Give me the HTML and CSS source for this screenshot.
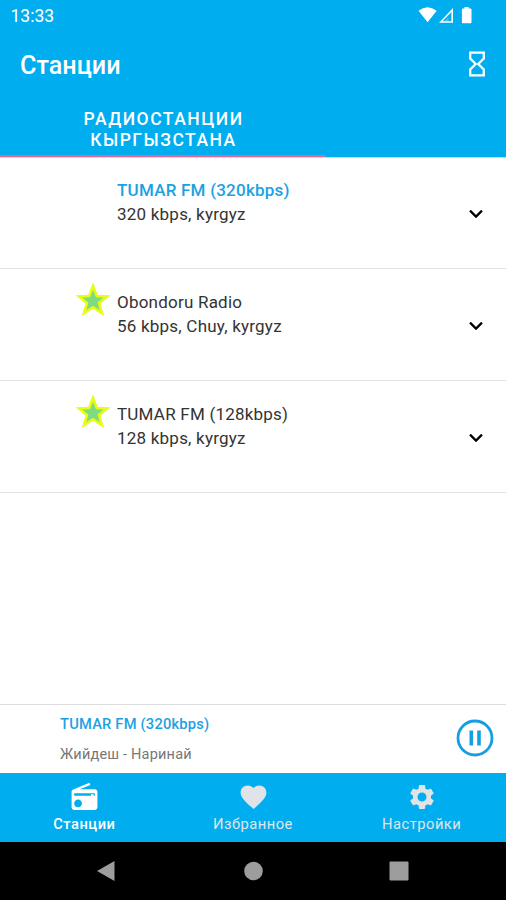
FILE: index.html
```html
<!DOCTYPE html>
<html lang="ru">
<head>
<meta charset="utf-8">
<title>Станции</title>
<link rel="stylesheet" href="styles.css">
</head>
<body>
<div class="app">
  <header class="header">
    <div class="status">
      <span class="clock">13:33</span>
      <svg class="status-icons" width="56" height="18" viewBox="0 0 56 18" fill="#fff">
        <path d="M0.5 4.8Q9.5-2.2 18.7 4.8L9.6 16.300Z"/>
        <path d="M22.800 16L34.200 4V16Z" fill="none" stroke="#fff" stroke-width="1.600"/>
        <path d="M30.500 11V15.500H26Z" opacity=".25"/>
        <path d="M46.500 1h4.300v1.600h1.700q1 0 1 1v12.700q0 1-1 1h-7.600q-1 0-1-1V3.600q0-1 1-1h1.600z"/>
      </svg>
    </div>
    <div class="toolbar">
      <h1 class="title">Станции</h1>
      <svg class="timer" width="18" height="26" viewBox="0 0 18 26" fill="none" stroke="#fff" stroke-width="2.300">
        <path d="M2.200 1.700H15.800V7.600L10.300 13L15.800 18.400V24.300H2.200V18.400L7.700 13L2.200 7.600Z"/>
      </svg>
    </div>
    <div class="tabs"><div class="tab">РАДИОСТАНЦИИ<br>КЫРГЫЗСТАНА</div></div>
  </header>

  <main class="list">
    <div class="row">
      <div class="mark"></div>
      <div class="info"><div class="name active">TUMAR FM (320kbps)</div><div class="meta">320 kbps, kyrgyz</div></div>
      <svg class="chevron" width="16" height="10" viewBox="0 0 16 10"><path d="M2 1.600L8 7.600L14 1.600"/></svg>
    </div>
    <div class="row">
      <div class="mark"><svg width="36" height="36" viewBox="0 0 36 36"><path class="star" d="M18 4L21.800 14L32 14.400L24 21L27 31.200L18 25.200L9 31.200L12 21L4 14.400L14.200 14Z"/></svg></div>
      <div class="info"><div class="name">Obondoru Radio</div><div class="meta">56 kbps, Chuy, kyrgyz</div></div>
      <svg class="chevron" width="16" height="10" viewBox="0 0 16 10"><path d="M2 1.600L8 7.600L14 1.600"/></svg>
    </div>
    <div class="row">
      <div class="mark"><svg width="36" height="36" viewBox="0 0 36 36"><path class="star" d="M18 4L21.800 14L32 14.400L24 21L27 31.200L18 25.200L9 31.200L12 21L4 14.400L14.200 14Z"/></svg></div>
      <div class="info"><div class="name">TUMAR FM (128kbps)</div><div class="meta">128 kbps, kyrgyz</div></div>
      <svg class="chevron" width="16" height="10" viewBox="0 0 16 10"><path d="M2 1.600L8 7.600L14 1.600"/></svg>
    </div>
  </main>

  <section class="player">
    <div class="now"><div class="now-name">TUMAR FM (320kbps)</div><div class="now-song">Жийдеш - Наринай</div></div>
    <svg class="pause" width="38" height="38" viewBox="0 0 38 38"><circle cx="19" cy="19" r="17" fill="none" stroke="#149fe2" stroke-width="2.800"/><path d="M13.500 11.500h3.600v15h-3.600zM21.200 11.500h3.600v15h-3.600z" fill="#149fe2"/></svg>
  </section>

  <nav class="nav">
    <div class="item selected">
      <svg width="31" height="31" viewBox="0 0 24 24" fill="currentColor"><path d="M3.240 6.150C2.510 6.430 2 7.170 2 8v12c0 1.100.89 2 2 2h16c1.110 0 2-.9 2-2V8c0-1.110-.89-2-2-2H8.300l8.260-3.340L15.880 1 3.240 6.150zM7 20c-1.660 0-3-1.340-3-3s1.340-3 3-3 3 1.340 3 3-1.340 3-3 3zm13-9h-1v-1.200h-2v1.200H4V9h16v2z"/></svg>
      <span>Станции</span>
    </div>
    <div class="item">
      <svg width="31" height="31" viewBox="0 0 24 24" fill="currentColor"><path d="M12 21.350l-1.450-1.320C5.400 15.360 2 12.280 2 8.500 2 5.420 4.420 3 7.500 3c1.740 0 3.410.81 4.500 2.090C13.090 3.810 14.760 3 16.500 3 19.580 3 22 5.420 22 8.500c0 3.780-3.400 6.860-8.550 11.540L12 21.350z"/></svg>
      <span>Избранное</span>
    </div>
    <div class="item">
      <svg width="30" height="30" viewBox="0 0 24 24" fill="currentColor"><path d="M19.140 12.940c.04-.3.060-.61.060-.94 0-.32-.02-.64-.07-.94l2.030-1.580c.18-.14.23-.41.12-.61l-1.920-3.320c-.12-.22-.37-.29-.59-.22l-2.390.96c-.5-.38-1.030-.7-1.620-.94l-.36-2.540c-.04-.24-.24-.41-.48-.41h-3.840c-.24 0-.43.17-.47.41l-.36 2.540c-.59.24-1.130.57-1.620.94l-2.390-.96c-.22-.08-.47 0-.59.22L2.740 8.870c-.12.21-.08.47.12.61l2.030 1.580c-.05.3-.09.63-.09.94s.02.64.07.94l-2.030 1.580c-.18.14-.23.41-.12.61l1.920 3.320c.12.22.37.29.59.22l2.390-.96c.5.38 1.030.7 1.620.94l.36 2.540c.05.24.24.41.48.41h3.840c.24 0 .44-.17.47-.41l.36-2.540c.59-.24 1.130-.56 1.620-.94l2.390.96c.22.08.47 0 .59-.22l1.920-3.320c.12-.22.070-.47-.12-.61l-2.010-1.580zM12 15.600c-1.980 0-3.600-1.620-3.600-3.600s1.620-3.600 3.600-3.600 3.600 1.620 3.600 3.600-1.620 3.600-3.600 3.600z"/></svg>
      <span>Настройки</span>
    </div>
  </nav>

  <div class="system">
    <svg width="20" height="22" viewBox="0 0 20 22"><path d="M1 11L18.500 1V21Z"/></svg>
    <svg width="20" height="20" viewBox="0 0 20 20"><circle cx="10.500" cy="10" r="9.300"/></svg>
    <svg width="20" height="20" viewBox="0 0 20 20"><rect x=".5" y=".5" width="19" height="19" rx="1"/></svg>
  </div>
</div>
</body>
</html>
```
FILE: styles.css
```css
* { box-sizing: border-box; }
body { margin: 0; font-family: Roboto, "Noto Sans", sans-serif; }
svg { display: block; flex: none; }
.app { width: 506px; height: 900px; display: flex; flex-direction: column; overflow: hidden; background: #fff; }

.header { height: 158px; flex: none; display: flex; flex-direction: column; background: #00adef; color: #fff; border-bottom: 1px solid #b9dfef; }
.status { height: 32px; display: flex; justify-content: space-between; padding: 6px 32px 0 10.500px; }
.clock { font-size: 17.500px; line-height: 21px; }
.toolbar { height: 66px; display: flex; justify-content: space-between; align-items: center; padding: 0 20px; }
.title { margin: 0; padding-top: 1px; font-size: 25.200px; line-height: 32px; font-weight: 500; }
.timer { margin-top: -2px; }
.tabs { flex: 1; display: flex; }
.tab { width: 326px; padding: 11px 0 0 1px; border-bottom: 2px solid #d96c9e; text-align: center; font-size: 17.500px; line-height: 20.500px; font-weight: 500; letter-spacing: 1.500px; }

.list { flex: 1; }
.row { height: 112px; display: flex; border-bottom: 1.500px solid #e2e2e2; padding-right: 22px; }
.row:first-child { height: 111px; }
.mark { width: 117px; padding: 13px 0 0 75px; }
.info { flex: 1; padding-top: 21px; color: #333; font-size: 17px; line-height: 24px; letter-spacing: .22px; }
.row:first-child .info { padding-top: 20px; }
.active { color: #1da1e3; font-weight: 500; }
.chevron { align-self: center; margin-top: 2px; fill: none; stroke: #000; stroke-width: 2.200px; }
.star { fill: #7bdc82; stroke: #e9fc12; stroke-width: 2.600px; }

.player { height: 69px; flex: none; display: flex; align-items: center; justify-content: space-between; border-top: 1px solid #ddd; padding: 0 12.500px 0 60px; }
.pause { margin-top: -2px; }
.now-name { color: #1da1e3; font-size: 14.700px; font-weight: 500; line-height: 30px; letter-spacing: .2px; }
.now-song { color: #777; font-size: 14.500px; line-height: 31px; letter-spacing: .2px; }

.nav { height: 69px; flex: none; display: flex; background: #00adef; color: #e0e4e8; }
.item { flex: 1; display: flex; flex-direction: column; align-items: center; }
.item svg { height: 34px; margin-top: 7px; }
.item span { font-size: 14.700px; line-height: 20px; letter-spacing: .5px; }
.item.selected span { font-weight: 500; letter-spacing: .5px; }
.selected { color: #fff; }
.system { height: 58px; flex: none; display: flex; justify-content: space-between; align-items: center; background: #000; padding: 0 97px 0 96px; fill: #9d9d9d; }
```
